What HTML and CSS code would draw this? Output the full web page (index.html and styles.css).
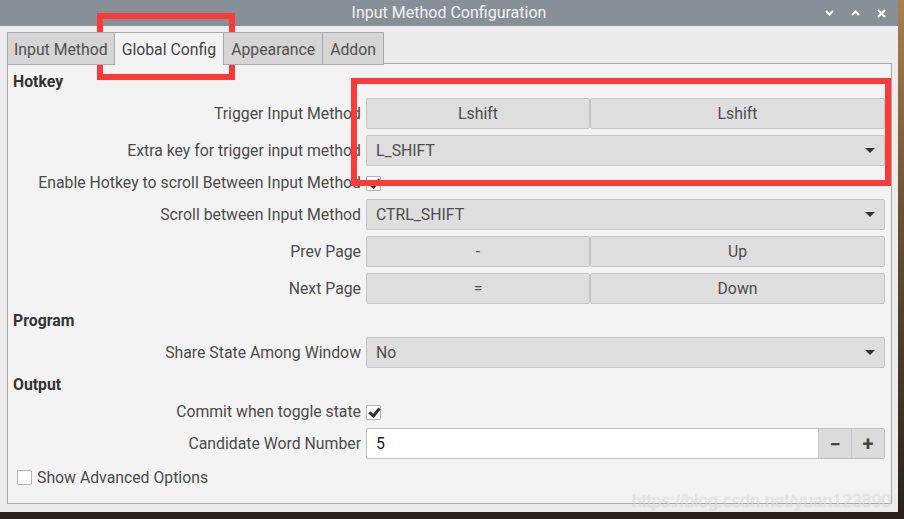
FILE: index.html
```html
<!DOCTYPE html>
<html lang="en">
<head>
  <meta charset="UTF-8">
  <title>Input Method Configuration</title>
  <link rel="stylesheet" href="styles.css">
</head>
<body>

  <div class="window">
    <div class="titlebar">
      <span></span>
      <div class="title">Input Method Configuration</div>
      <div class="win-buttons">
        <svg width="9" height="6" viewBox="0 0 9 6"><path d="M1 1 L4.5 4.5 L8 1" fill="none" stroke="#fff" stroke-width="2"/></svg>
        <svg width="9" height="6" viewBox="0 0 9 6"><path d="M1 5 L4.5 1.5 L8 5" fill="none" stroke="#fff" stroke-width="2"/></svg>
        <svg width="9" height="9" viewBox="0 0 9 9"><path d="M1 1 L8 8 M8 1 L1 8" fill="none" stroke="#fff" stroke-width="2.2"/></svg>
      </div>
    </div>

    <div class="content">
      <div class="tabs">
        <div class="tab first">Input Method</div>
        <div class="tab active">Global Config</div>
        <div class="tab">Appearance</div>
        <div class="tab">Addon</div>
      </div>

      <div class="panel">
        <div class="section">Hotkey</div>

        <div class="row">
          <label>Trigger Input Method</label>
          <div class="pair">
            <button class="key">Lshift</button>
            <button class="key">Lshift</button>
          </div>
        </div>

        <div class="row">
          <label>Extra key for trigger input method</label>
          <div class="combo">L_SHIFT<span class="arrow"></span></div>
        </div>

        <div class="row small">
          <label>Enable Hotkey to scroll Between Input Method</label>
          <div><span class="check on"></span></div>
        </div>

        <div class="row">
          <label>Scroll between Input Method</label>
          <div class="combo">CTRL_SHIFT<span class="arrow"></span></div>
        </div>

        <div class="row">
          <label>Prev Page</label>
          <div class="pair">
            <button class="key">-</button>
            <button class="key">Up</button>
          </div>
        </div>

        <div class="row">
          <label>Next Page</label>
          <div class="pair">
            <button class="key">=</button>
            <button class="key">Down</button>
          </div>
        </div>

        <div class="section">Program</div>

        <div class="row">
          <label>Share State Among Window</label>
          <div class="combo">No<span class="arrow"></span></div>
        </div>

        <div class="section">Output</div>

        <div class="row small">
          <label>Commit when toggle state</label>
          <div><span class="check on"></span></div>
        </div>

        <div class="row">
          <label>Candidate Word Number</label>
          <div class="spin">
            <span class="spin-value">5</span>
            <span class="spin-btn">&minus;</span>
            <span class="spin-btn">+</span>
          </div>
        </div>

        <div class="advanced">
          <span class="check"></span>
          Show Advanced Options
        </div>
      </div>
    </div>
  </div>

  <!-- annotation boxes drawn over the screenshot -->
  <div class="mark mark-tab"></div>
  <div class="mark mark-keys"></div>

  <div class="watermark">https://blog.csdn.net/yuan123890</div>

</body>
</html>
```

FILE: styles.css
```css
body {
  margin: 0;
  width: 904px;
  height: 519px;
  overflow: hidden;
  position: relative;
  background: linear-gradient(180deg, #a98050 0%, #6b5236 40%, #2a2017 100%);
  font-family: Roboto, "Liberation Sans", sans-serif;
  font-size: 15.8px;
  color: #4b4b4b;
}

.window {
  width: 898px;
  height: 512px;
  background-color: #ececec;
  display: flex;
  flex-direction: column;
}

.titlebar {
  height: 26px;
  background-color: #878f99;
  display: grid;
  grid-template-columns: 1fr auto 1fr;
  align-items: center;
}

.title {
  color: #f2f2f2;
  font-size: 16px;
  margin-top: -2px;
}

.win-buttons {
  justify-self: end;
  display: flex;
  align-items: center;
  gap: 17px;
  padding-right: 12px;
}

.win-buttons svg {
  display: block;
}

.content {
  padding: 6px 6px 0 7px;
  display: flex;
  flex-direction: column;
}

.tabs {
  display: flex;
  height: 32px;
  position: relative;
  z-index: 1;
}

.tab {
  padding: 1px 7px 0;
  display: flex;
  align-items: center;
  background-color: #d5d5d5;
  border: 1px solid #a9a9a9;
  border-right: none;
  height: 30px;
  color: #505050;
}

.tab.first {
  padding: 1px 6px 0;
}

.tab:last-child {
  border-right: 1px solid #a9a9a9;
}

.tab.active {
  background-color: #f3f3f3;
  border-bottom: none;
  height: 31px;
  color: #444;
}

.panel {
  margin-top: -1px;
  height: 441px;
  background-color: #f3f3f3;
  border: 1px solid #a9a9a9;
  padding: 8px 6px 0 5px;
  display: flex;
  flex-direction: column;
  gap: 6px;
  box-sizing: border-box;
}

.section {
  height: 20px;
  line-height: 20px;
  font-weight: bold;
  color: #333;
}

.panel .section:not(:first-child) {
  margin-top: 1px;
}

.row {
  display: grid;
  grid-template-columns: 348px 1fr;
  column-gap: 5px;
  align-items: center;
  height: 31px;
}

.row.small {
  height: 21px;
}

.row label {
  text-align: right;
  white-space: nowrap;
}

.pair {
  display: grid;
  grid-template-columns: 224px 1fr;
  height: 31px;
}

.key {
  font-family: inherit;
  font-size: 15.8px;
  color: #4d4d4d;
  background-color: #dedede;
  border: 1px solid #c6c6c6;
  border-radius: 2px;
  margin: 0;
  padding: 0;
  height: 31px;
}

.combo {
  height: 31px;
  box-sizing: border-box;
  background-color: #dedede;
  border: 1px solid #c6c6c6;
  border-radius: 2px;
  padding: 0 9px;
  display: flex;
  align-items: center;
  justify-content: space-between;
  color: #4d4d4d;
}

.arrow {
  width: 0;
  height: 0;
  border-left: 5px solid transparent;
  border-right: 5px solid transparent;
  border-top: 5px solid #333;
}

.check {
  display: inline-block;
  width: 13px;
  height: 13px;
  background-color: #fff;
  border: 1px solid #b4b4b4;
  border-radius: 1px;
  vertical-align: middle;
  position: relative;
}

.check.on::after {
  content: "";
  position: absolute;
  left: 4px;
  top: 0px;
  width: 4px;
  height: 8px;
  border-right: 3px solid #333;
  border-bottom: 3px solid #333;
  transform: rotate(40deg);
}

.spin {
  height: 31px;
  box-sizing: border-box;
  background-color: #fff;
  border: 1px solid #c0c0c0;
  border-radius: 2px;
  display: flex;
  align-items: stretch;
}

.spin-value {
  flex: 1;
  display: flex;
  align-items: center;
  padding-left: 9px;
  color: #222;
}

.spin-btn {
  width: 32px;
  display: flex;
  align-items: center;
  justify-content: center;
  background-color: #dcdcdc;
  border-left: 1px solid #cacaca;
  font-size: 20px;
  font-weight: bold;
  color: #444;
}

.advanced {
  margin-top: -1px;
  margin-left: 4px;
  display: flex;
  align-items: center;
  gap: 5px;
  height: 26px;
}

.mark {
  position: absolute;
  border: 6px solid #fb3a3a;
  box-sizing: border-box;
}

.mark-tab {
  left: 97px;
  top: 13px;
  width: 138px;
  height: 67px;
}

.mark-keys {
  left: 351px;
  top: 78px;
  width: 540px;
  height: 108px;
}

.watermark {
  position: absolute;
  left: 632px;
  top: 491px;
  font-family: "Liberation Sans", sans-serif;
  font-size: 17.6px;
  color: rgba(255, 255, 255, 0.55);
  text-shadow: 0 0 1px rgba(120, 120, 120, 0.4);
}
```
